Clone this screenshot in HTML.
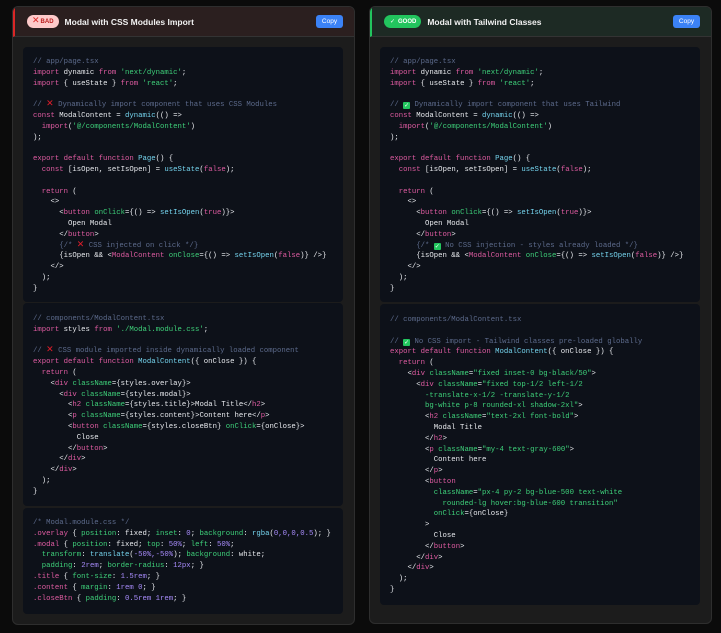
<!DOCTYPE html>
<html><head><meta charset="utf-8"><style>
*{margin:0;padding:0;box-sizing:border-box}
body{width:721px;height:633px;background:#0b0b0b;position:relative;overflow:hidden;font-family:"Liberation Sans",sans-serif}
.card{position:absolute;top:6px;width:343px;height:619px;background:#1c1c1c;border:1px solid #2e2e2e;border-radius:6px;overflow:hidden}
.hd{height:30px;border-bottom:1px solid #333;position:relative;display:flex;align-items:center;padding-left:12px}
.bad .hd{background:#2b1f1f;border-left:2px solid #dc2626}
.good .hd{background:#1d2a24;border-left:2px solid #22c55e}
.pill{height:13px;border-radius:7px;font-size:6px;font-weight:bold;display:flex;align-items:center;padding:0 5px;margin-right:6px}
.bad .pill{background:#fecaca;color:#b91c1c}
.good .pill{background:#22c55e;color:#fff}
.title{color:#f1f1f1;font-weight:bold;font-size:8.5px}
.copy{position:absolute;right:11px;top:8px;width:27px;height:13px;background:#3b82f6;color:#fff;font-size:6.5px;border-radius:3px;display:flex;align-items:center;justify-content:center}
pre{position:absolute;left:10px;width:320px;background:#0d1119;border-radius:4px;font-family:"Liberation Mono",monospace;font-size:7.3px;line-height:10.8px;color:#e8eaee;padding:0 10px;white-space:pre}
.c{color:#5d6b8c}.k{color:#e05ca2}.s{color:#3ed17a}.f{color:#76d6f0}.n{color:#a78bfa}.a{color:#3ed17a}
.x{color:#e11d2a;font-weight:bold;font-size:9px;line-height:7px;font-family:"DejaVu Sans",sans-serif}
.ok{display:inline-block;width:7px;height:7px;background:#22c55e;border-radius:1px;color:#fff;font-size:6px;line-height:7px;text-align:center;vertical-align:-1px;font-family:"DejaVu Sans",sans-serif}
</style></head><body>

<div class="card bad" style="left:12px">
<div class="hd"><div class="pill"><span class="x" style="color:#dc2626;margin-right:1px">✕</span>BAD</div><div class="title">Modal with CSS Modules Import</div><div class="copy">Copy</div></div>
<pre style="top:40px;height:255px;padding-top:10px"><span class="c">// app/page.tsx</span>
<span class="k">import</span> dynamic <span class="k">from</span> <span class="s">'next/dynamic'</span>;
<span class="k">import</span> { useState } <span class="k">from</span> <span class="s">'react'</span>;

<span class="c">// <span class="x">✕</span> Dynamically import component that uses CSS Modules</span>
<span class="k">const</span> ModalContent = <span class="f">dynamic</span>(() =&gt;
  <span class="k">import</span>(<span class="s">'@/components/ModalContent'</span>)
);

<span class="k">export default function</span> <span class="f">Page</span>() {
  <span class="k">const</span> [isOpen, setIsOpen] = <span class="f">useState</span>(<span class="k">false</span>);

  <span class="k">return</span> (
    &lt;&gt;
      &lt;<span class="k">button</span> <span class="a">onClick</span>={() =&gt; <span class="f">setIsOpen</span>(<span class="k">true</span>)}&gt;
        Open Modal
      &lt;/<span class="k">button</span>&gt;
      <span class="c">{/* <span class="x">✕</span> CSS injected on click */}</span>
      {isOpen &amp;&amp; &lt;<span class="k">ModalContent</span> <span class="a">onClose</span>={() =&gt; <span class="f">setIsOpen</span>(<span class="k">false</span>)} /&gt;}
    &lt;/&gt;
  );
}</pre>
<pre style="top:296px;height:203px;padding-top:11px"><span class="c">// components/ModalContent.tsx</span>
<span class="k">import</span> styles <span class="k">from</span> <span class="s">'./Modal.module.css'</span>;

<span class="c">// <span class="x">✕</span> CSS module imported inside dynamically loaded component</span>
<span class="k">export default function</span> <span class="f">ModalContent</span>({ onClose }) {
  <span class="k">return</span> (
    &lt;<span class="k">div</span> <span class="a">className</span>={styles.overlay}&gt;
      &lt;<span class="k">div</span> <span class="a">className</span>={styles.modal}&gt;
        &lt;<span class="k">h2</span> <span class="a">className</span>={styles.title}&gt;Modal Title&lt;/<span class="k">h2</span>&gt;
        &lt;<span class="k">p</span> <span class="a">className</span>={styles.content}&gt;Content here&lt;/<span class="k">p</span>&gt;
        &lt;<span class="k">button</span> <span class="a">className</span>={styles.closeBtn} <span class="a">onClick</span>={onClose}&gt;
          Close
        &lt;/<span class="k">button</span>&gt;
      &lt;/<span class="k">div</span>&gt;
    &lt;/<span class="k">div</span>&gt;
  );
}</pre>
<pre style="top:501px;height:106px;padding-top:10px"><span class="c">/* Modal.module.css */</span>
<span class="k">.overlay</span> { <span class="a">position</span>: fixed; <span class="a">inset</span>: <span class="n">0</span>; <span class="a">background</span>: <span class="f">rgba</span>(<span class="n">0,0,0,0.5</span>); }
<span class="k">.modal</span> { <span class="a">position</span>: fixed; <span class="a">top</span>: <span class="n">50%</span>; <span class="a">left</span>: <span class="n">50%</span>;
  <span class="a">transform</span>: <span class="f">translate</span>(<span class="n">-50%,-50%</span>); <span class="a">background</span>: white;
  <span class="a">padding</span>: <span class="n">2rem</span>; <span class="a">border-radius</span>: <span class="n">12px</span>; }
<span class="k">.title</span> { <span class="a">font-size</span>: <span class="n">1.5rem</span>; }
<span class="k">.content</span> { <span class="a">margin</span>: <span class="n">1rem 0</span>; }
<span class="k">.closeBtn</span> { <span class="a">padding</span>: <span class="n">0.5rem 1rem</span>; }</pre>
</div>

<div class="card good" style="left:369px;height:618px">
<div class="hd"><div class="pill"><span class="ok" style="margin-right:2px">✓</span>GOOD</div><div class="title">Modal with Tailwind Classes</div><div class="copy">Copy</div></div>
<pre style="top:40px;height:255px;padding-top:10px"><span class="c">// app/page.tsx</span>
<span class="k">import</span> dynamic <span class="k">from</span> <span class="s">'next/dynamic'</span>;
<span class="k">import</span> { useState } <span class="k">from</span> <span class="s">'react'</span>;

<span class="c">// <span class="ok">✓</span> Dynamically import component that uses Tailwind</span>
<span class="k">const</span> ModalContent = <span class="f">dynamic</span>(() =&gt;
  <span class="k">import</span>(<span class="s">'@/components/ModalContent'</span>)
);

<span class="k">export default function</span> <span class="f">Page</span>() {
  <span class="k">const</span> [isOpen, setIsOpen] = <span class="f">useState</span>(<span class="k">false</span>);

  <span class="k">return</span> (
    &lt;&gt;
      &lt;<span class="k">button</span> <span class="a">onClick</span>={() =&gt; <span class="f">setIsOpen</span>(<span class="k">true</span>)}&gt;
        Open Modal
      &lt;/<span class="k">button</span>&gt;
      <span class="c">{/* <span class="ok">✓</span> No CSS injection - styles already loaded */}</span>
      {isOpen &amp;&amp; &lt;<span class="k">ModalContent</span> <span class="a">onClose</span>={() =&gt; <span class="f">setIsOpen</span>(<span class="k">false</span>)} /&gt;}
    &lt;/&gt;
  );
}</pre>
<pre style="top:297px;height:301px;padding-top:11px"><span class="c">// components/ModalContent.tsx</span>

<span class="c">// <span class="ok">✓</span> No CSS import - Tailwind classes pre-loaded globally</span>
<span class="k">export default function</span> <span class="f">ModalContent</span>({ onClose }) {
  <span class="k">return</span> (
    &lt;<span class="k">div</span> <span class="a">className</span>=<span class="s">"fixed inset-0 bg-black/50"</span>&gt;
      &lt;<span class="k">div</span> <span class="a">className</span>=<span class="s">"fixed top-1/2 left-1/2</span>
<span class="s">        -translate-x-1/2 -translate-y-1/2</span>
<span class="s">        bg-white p-8 rounded-xl shadow-2xl"</span>&gt;
        &lt;<span class="k">h2</span> <span class="a">className</span>=<span class="s">"text-2xl font-bold"</span>&gt;
          Modal Title
        &lt;/<span class="k">h2</span>&gt;
        &lt;<span class="k">p</span> <span class="a">className</span>=<span class="s">"my-4 text-gray-600"</span>&gt;
          Content here
        &lt;/<span class="k">p</span>&gt;
        &lt;<span class="k">button</span>
          <span class="a">className</span>=<span class="s">"px-4 py-2 bg-blue-500 text-white</span>
<span class="s">            rounded-lg hover:bg-blue-600 transition"</span>
          <span class="a">onClick</span>={onClose}
        &gt;
          Close
        &lt;/<span class="k">button</span>&gt;
      &lt;/<span class="k">div</span>&gt;
    &lt;/<span class="k">div</span>&gt;
  );
}</pre>
</div>
</body></html>
